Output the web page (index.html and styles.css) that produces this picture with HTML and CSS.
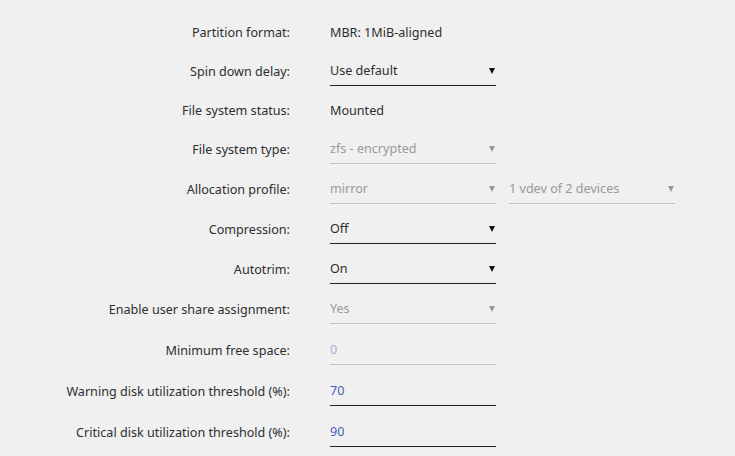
FILE: index.html
```html
<!DOCTYPE html>
<html lang="en">
<head>
    <meta charset="UTF-8">
    <title>Disk Settings</title>
    <link rel="stylesheet" href="styles.css">
</head>
<body>
    <!-- 디스크 설정 폼 -->
    <form class="settings">
        <div class="row row-cut">
            <div class="label"></div>
            <div class="value">sdb, sdc, 1 TB, (2 devices)</div>
        </div>

        <div class="row short">
            <div class="label">Partition format:</div>
            <div class="value">MBR: 1MiB-aligned</div>
        </div>

        <div class="row short">
            <div class="label">Spin down delay:</div>
            <div class="value"><div class="select">Use default</div></div>
        </div>

        <div class="row short">
            <div class="label">File system status:</div>
            <div class="value">Mounted</div>
        </div>

        <div class="row">
            <div class="label">File system type:</div>
            <div class="value"><div class="select disabled">zfs - encrypted</div></div>
        </div>

        <div class="row">
            <div class="label">Allocation profile:</div>
            <div class="value">
                <div class="select disabled">mirror</div>
                <div class="select disabled">1 vdev of 2 devices</div>
            </div>
        </div>

        <div class="row">
            <div class="label">Compression:</div>
            <div class="value"><div class="select">Off</div></div>
        </div>

        <div class="row">
            <div class="label">Autotrim:</div>
            <div class="value"><div class="select">On</div></div>
        </div>

        <div class="row">
            <div class="label">Enable user share assignment:</div>
            <div class="value"><div class="select disabled">Yes</div></div>
        </div>

        <div class="row tall">
            <div class="label">Minimum free space:</div>
            <div class="value"><div class="input disabled placeholder">0</div></div>
        </div>

        <div class="row tall">
            <div class="label">Warning disk utilization threshold (%):</div>
            <div class="value"><div class="input">70</div></div>
        </div>

        <div class="row tall">
            <div class="label">Critical disk utilization threshold (%):</div>
            <div class="value"><div class="input">90</div></div>
        </div>
    </form>
</body>
</html>
```

FILE: styles.css
```css
* {
    margin: 0;
    padding: 0;
    box-sizing: border-box;
}

body {
    font-family: 'Noto Sans', 'Liberation Sans', sans-serif;
    font-size: 12.6px;
    color: #2e2e2e;
    background-color: #f0f0f0;
    overflow: hidden;
}

/* 폼 레이아웃 */
.settings {
    display: flex;
    flex-direction: column;
    margin-top: -25.5px;
}

.row {
    display: grid;
    grid-template-columns: 290px 1fr;
    column-gap: 40px;
    align-items: center;
    height: 40px;
}

.row.short {
    height: 39px;
}

.row.tall {
    height: 41px;
}

.row-cut {
    height: 38px;
}

.label {
    text-align: right;
}

.value {
    display: flex;
    gap: 13px;
    align-items: center;
}

/* 셀렉트 박스 */
.select,
.input {
    position: relative;
    width: 166px;
    height: 29px;
    line-height: 28px;
    border-bottom: 1px solid #222;
}

.input {
    height: 30px;
    line-height: 29px;
}

.select::after {
    content: '';
    position: absolute;
    right: 1px;
    top: 11px;
    width: 0;
    height: 0;
    border-left: 3px solid transparent;
    border-right: 3px solid transparent;
    border-top: 6px solid #111;
}

.select.disabled {
    color: #999;
    border-bottom-color: #c4c4c4;
}

.select.disabled::after {
    border-top-color: #999;
}

/* 입력 칸 */
.input {
    color: #4562b8;
}

.input.disabled {
    border-bottom-color: #c4c4c4;
}

.input.placeholder {
    color: #a3acd6;
}
```
